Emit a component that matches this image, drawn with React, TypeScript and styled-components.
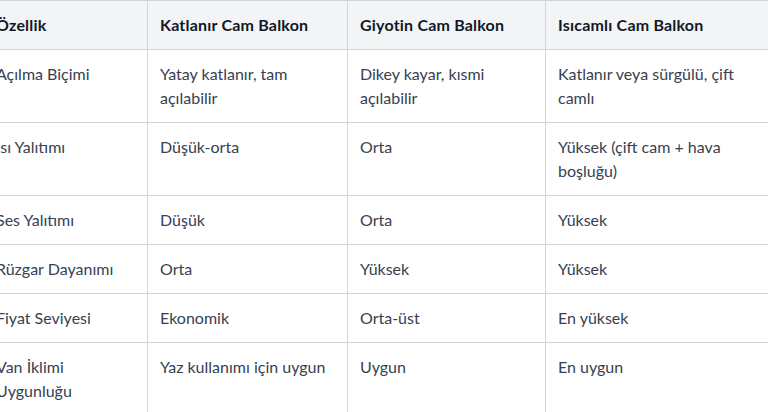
import { useLayoutEffect, useRef } from "react";
import styled, { createGlobalStyle } from "styled-components";

const GlobalStyle = createGlobalStyle`
  html, body {
    margin: 0;
    padding: 0;
    background: #ffffff;
  }
  body {
    font-family: Lato, "Noto Sans", "DejaVu Sans", sans-serif;
  }
`;

const ScrollArea = styled.div`
  width: 768px;
  height: 412px;
  overflow-x: auto;
  overflow-y: hidden;
  scrollbar-width: none;
  &::-webkit-scrollbar {
    display: none;
  }
`;

const Table = styled.table`
  border-collapse: collapse;
  table-layout: fixed;
  width: 798px;
  font-size: 16px;
  line-height: 24px;
  color: #374151;
`;

const Col = styled.col<{ $w: number }>`
  width: ${(p) => p.$w}px;
`;

const HeadCell = styled.th`
  text-align: left;
  vertical-align: top;
  padding: 12px;
  font-weight: 700;
  letter-spacing: 0.2px;
  color: #111827;
  background: #f3f4f6;
  border: 1px solid #d1d5db;
`;

const Cell = styled.td`
  vertical-align: top;
  padding: 12px;
  border: 1px solid #d1d5db;
`;

const columns = [
  "Özellik",
  "Katlanır Cam Balkon",
  "Giyotin Cam Balkon",
  "Isıcamlı Cam Balkon",
];

const rows: string[][] = [
  ["Açılma Biçimi", "Yatay katlanır, tam açılabilir", "Dikey kayar, kısmi açılabilir", "Katlanır veya sürgülü, çift camlı"],
  ["Isı Yalıtımı", "Düşük-orta", "Orta", "Yüksek (çift cam + hava boşluğu)"],
  ["Ses Yalıtımı", "Düşük", "Orta", "Yüksek"],
  ["Rüzgar Dayanımı", "Orta", "Yüksek", "Yüksek"],
  ["Fiyat Seviyesi", "Ekonomik", "Orta-üst", "En yüksek"],
  ["Van İklimi Uygunluğu", "Yaz kullanımı için uygun", "Uygun", "En uygun"],
];

const widths = [164, 200, 198, 236];

export default function App() {
  const scrollRef = useRef<HTMLDivElement>(null);

  // the table is shown scrolled slightly to the right
  useLayoutEffect(() => {
    if (scrollRef.current) scrollRef.current.scrollLeft = 17;
  }, []);

  return (
    <>
      <GlobalStyle />
      <ScrollArea ref={scrollRef}>
        <Table>
          <colgroup>
            {widths.map((w, i) => (
              <Col key={i} $w={w} />
            ))}
          </colgroup>
          <thead>
            <tr>
              {columns.map((c) => (
                <HeadCell key={c}>{c}</HeadCell>
              ))}
            </tr>
          </thead>
          <tbody>
            {rows.map((r) => (
              <tr key={r[0]}>
                {r.map((v, i) => (
                  <Cell key={i}>{v}</Cell>
                ))}
              </tr>
            ))}
          </tbody>
        </Table>
      </ScrollArea>
    </>
  );
}
